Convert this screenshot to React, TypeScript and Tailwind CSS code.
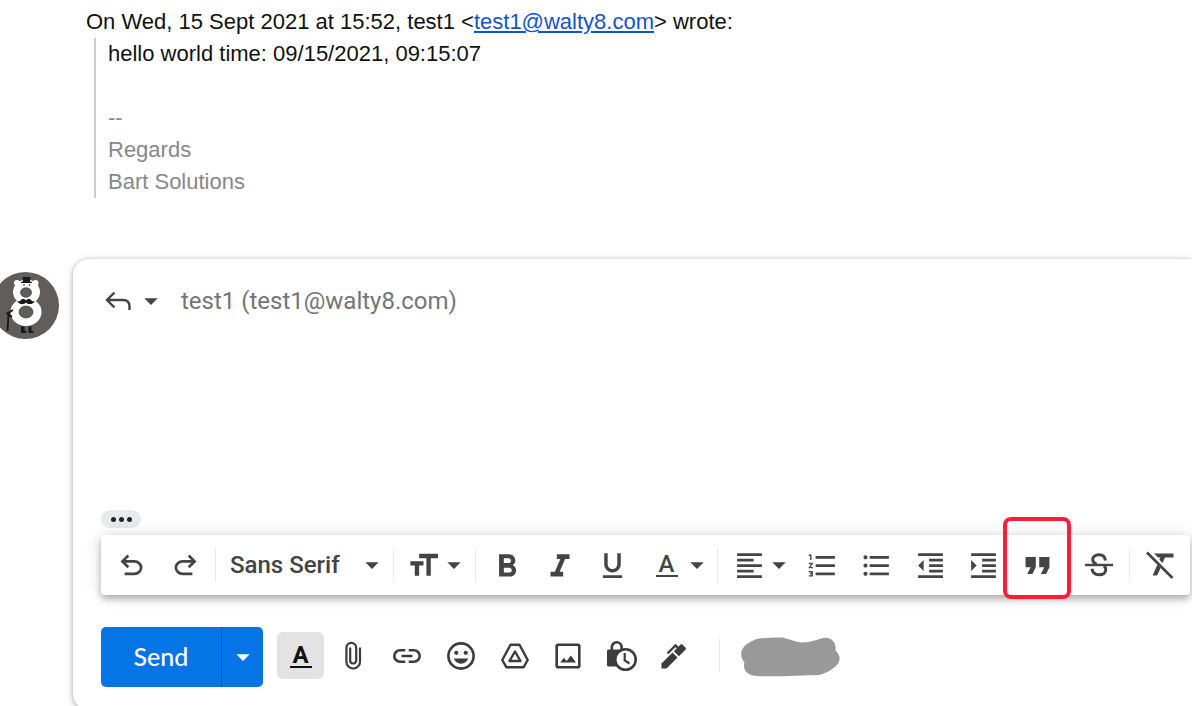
import type { ReactNode } from 'react';
import {
  MdArrowDropDown,
  MdFormatAlignLeft,
  MdFormatBold,
  MdFormatIndentDecrease,
  MdFormatIndentIncrease,
  MdFormatItalic,
  MdFormatListBulleted,
  MdFormatListNumbered,
  MdFormatQuote,
  MdFormatSize,
  MdFormatUnderlined,
} from 'react-icons/md';

interface ToolButtonProps {
  label: string;
  className?: string;
  children: ReactNode;
}

function ToolButton({ label, className = 'w-[54px]', children }: ToolButtonProps) {
  return (
    <button
      type="button"
      aria-label={label}
      title={label}
      className={`flex h-full shrink-0 items-center justify-center ${className}`}
    >
      {children}
    </button>
  );
}

function Divider() {
  return <span className="h-[33px] w-px shrink-0 bg-[#e4e7eb]" />;
}

function Caret() {
  return <MdArrowDropDown size={32} className="-ml-[3px] -mr-1 shrink-0" />;
}

function LetterA({ className = '' }: { className?: string }) {
  return (
    <span
      className={`flex h-[24px] w-[22px] items-end justify-center border-b-2 border-current text-2xl leading-[22px] ${className}`}
    >
      A
    </span>
  );
}

function Avatar() {
  return (
    <svg width="60" height="68" viewBox="0 0 60 68" className="mt-[13px] shrink-0" aria-label="test1">
      <circle cx="25.5" cy="33.5" r="33.5" fill="#625d5c" />
      <g fill="#fff">
        <circle cx="17" cy="11" r="3" />
        <circle cx="35.500" cy="11" r="3" />
        <ellipse cx="26.500" cy="20" rx="13.500" ry="12.500" />
        <ellipse cx="26" cy="40" rx="15.500" ry="14" />
      </g>
      <ellipse cx="26" cy="20.500" rx="5.500" ry="4.800" fill="#625d5c" stroke="#22262a" strokeWidth="0.600" />
      <ellipse cx="26" cy="40" rx="7" ry="6" fill="#625d5c" stroke="#22262a" strokeWidth="0.600" />
      <g fill="#15191d">
        <path d="M22.500 5h8l-.6 4.500 2 .5v1H21v-1l2-.5z" />
        <circle cx="24" cy="13" r=".8" />
        <circle cx="29.500" cy="13" r=".8" />
        <path d="M26 28.500c-2-2.500-5-1.500-5.500 0-.7 1.200-2.300 1-3.200.2.700 3.800 6.700 4.300 8.700 1.800 2 2.500 8 2 8.700-1.800-.9.800-2.500 1-3.200-.2-.5-1.500-3.500-2.500-5.500 0z" />
        <path d="M21 54.500h3.500v4l2 1v1.500H21zM28.500 54.500h3v4l2 1v1.500h-5z" />
      </g>
      <path d="M6.500 42l6.500-4M7 41l5 4M8.500 42.500L7.500 59" fill="none" stroke="#15191d" strokeWidth="1.800" />
    </svg>
  );
}

function ReplyIcon() {
  return (
    <svg width="28" height="22" viewBox="0 0 28 22" fill="none" stroke="currentColor" strokeWidth="2.400">
      <path d="M10.500 2.500L3 10l7.500 7.500M3.500 10H19q6.500 0 6.500 6.500V20" />
    </svg>
  );
}

function UndoIcon({ className = '' }: { className?: string }) {
  return (
    <svg width="33" height="33" viewBox="0 0 24 24" fill="currentColor" className={className}>
      <path d="M7 19v-2h7.100q1.575 0 2.738-1T18 13.500 16.838 11 14.100 10H7.800l2.600 2.600L9 14 4 9l5-5 1.400 1.400L7.800 8h6.300q2.425 0 4.163 1.575T20 13.500t-1.737 3.925T14.100 19z" />
    </svg>
  );
}

function StrikeIcon() {
  return (
    <svg width="30" height="26" viewBox="0 0 30 26" fill="none" stroke="currentColor" strokeWidth="3">
      <path d="M21.500 8.500C21 4.800 18.500 2.800 15 2.800c-3.800 0-6.300 2-6.300 4.700 0 2.200 1.300 3.700 4 4.700M8 16.800c.5 4 3.300 6 7 6 4.200 0 6.800-2 6.800-5 0-1.500-.6-2.800-1.800-3.800" />
      <path d="M1 13h28" strokeWidth="2.400" />
    </svg>
  );
}

function ClearIcon() {
  return (
    <svg width="30" height="28" viewBox="0 0 30 28" fill="none">
      <path d="M9 2.500h19.500v4H20l-2.500 5.500-3.200-3.200 1-2.300H13zM12.500 13.500l3.200 3.200-3.600 7.800H7.600z" fill="currentColor" />
      <path d="M2 1.500l25.500 25.500" stroke="currentColor" strokeWidth="2.600" />
    </svg>
  );
}

function AttachIcon() {
  return (
    <svg width="20" height="30" viewBox="0 0 20 30" fill="none" stroke="currentColor" strokeWidth="2.200">
      <path d="M17 6.500v14.200a6.800 6.800 0 0 1-13.600 0V6.800a4.900 4.900 0 0 1 9.800 0v12.700a3 3 0 0 1-6 0V6.500" />
    </svg>
  );
}

function LinkIcon() {
  return (
    <svg width="30" height="16" viewBox="0 0 30 16" fill="none" stroke="currentColor" strokeWidth="2.600">
      <path d="M13.300 2.300H8a5.700 5.700 0 0 0 0 11.400h5.300M16.700 2.300H22a5.700 5.700 0 0 1 0 11.400h-5.300M9.500 8h11" />
    </svg>
  );
}

function EmojiIcon() {
  return (
    <svg width="30" height="30" viewBox="0 0 30 30" fill="currentColor">
      <circle cx="15" cy="15" r="12.600" fill="none" stroke="currentColor" strokeWidth="2.600" />
      <circle cx="10.300" cy="11.800" r="2.100" />
      <circle cx="19.700" cy="11.800" r="2.100" />
      <path d="M7.800 17.500h14.400c-1.200 3.300-3.900 5.200-7.200 5.200s-6-1.900-7.200-5.200z" />
    </svg>
  );
}

function DriveIcon() {
  return (
    <svg width="30" height="28" viewBox="0 0 30 28" fill="none" stroke="currentColor" strokeWidth="2.400" strokeLinejoin="round">
      <path d="M10.500 2.700h9L27.700 18l-4 7.200H6.300l-4-7.200z" />
      <path d="M15 9.500l5.500 9.500h-11z" />
    </svg>
  );
}

function PhotoIcon() {
  return (
    <svg width="28" height="28" viewBox="0 0 28 28" fill="currentColor">
      <rect x="2.700" y="2.700" width="22.600" height="22.600" rx="1.500" fill="none" stroke="currentColor" strokeWidth="2.600" />
      <path d="M6.300 20.500l3.600-4.700 2.700 3.200 4.300-5.600 5.100 7.100z" />
    </svg>
  );
}

function ConfidentialIcon() {
  return (
    <svg width="32" height="32" viewBox="0 0 32 32" fill="none" stroke="currentColor">
      <path d="M6.800 10.500V7.200a4.900 4.900 0 0 1 9.800 0v3.300" strokeWidth="2.600" />
      <path d="M3.500 9.500h16v17h-16a1.500 1.500 0 0 1-1.500-1.500V11a1.500 1.500 0 0 1 1.500-1.500z" fill="currentColor" stroke="none" />
      <circle cx="20.500" cy="19.500" r="10.300" fill="#fff" strokeWidth="2.600" />
      <path d="M19.700 13v7.300l4.800 3.200" strokeWidth="2.200" />
    </svg>
  );
}

function PenIcon() {
  return (
    <svg width="28" height="28" viewBox="0 0 28 28" fill="currentColor">
      <path d="M1.500 26.500v-5L12.500 10.500l5 5L6.500 26.500z" />
      <path d="M13.800 9.200l6.500-6.500a1.600 1.600 0 0 1 2.300 0l2.800 2.800a1.600 1.600 0 0 1 0 2.300l-6.500 6.500z" />
      <path d="M7.500 11.500l8-8 2.500 2.500" fill="none" stroke="currentColor" strokeWidth="2.300" />
    </svg>
  );
}

function QuotedMessage() {
  return (
    <section className="pl-[86px] pt-[6px] font-['Liberation_Sans',Arial,sans-serif] text-[22px] leading-[32px] text-[#111]">
      <p>
        On Wed, 15 Sept 2021 at 15:52, test1 &lt;
        <a href="mailto:test1@walty8.com" className="text-[#1155cc] underline">
          test1@walty8.com
        </a>
        &gt; wrote:
      </p>
      <blockquote className="ml-[8px] border-l-2 border-[#ccc] pl-3">
        <p>hello world time: 09/15/2021, 09:15:07</p>
        <br />
        <div className="text-[#888]">
          <p>--</p>
          <p>Regards</p>
          <p>Bart Solutions</p>
        </div>
      </blockquote>
    </section>
  );
}

function FormatBar() {
  return (
    <div
      role="toolbar"
      aria-label="Formatting options"
      className="mr-[2px] mt-[7px] flex h-[60px] items-center rounded bg-white pl-[3px] text-[#444] shadow-[0_4px_7px_rgba(0,0,0,0.28),0_0_18px_rgba(0,0,0,0.12)]"
    >
      <ToolButton label="Undo">
        <UndoIcon />
      </ToolButton>
      <ToolButton label="Redo" className="mr-[3px] w-[54px]">
        <UndoIcon className="-scale-x-100" />
      </ToolButton>
      <Divider />
      <div className="relative flex h-full w-[177px] shrink-0 items-center">
        <select
          aria-label="Font"
          className="h-full w-full appearance-none bg-transparent pl-[14px] text-2xl font-medium outline-none"
        >
          <option>Sans Serif</option>
          <option>Serif</option>
          <option>Fixed Width</option>
        </select>
        <MdArrowDropDown size={32} className="pointer-events-none absolute right-[5px]" />
      </div>
      <Divider />
      <ToolButton label="Size" className="w-[81px] pl-[3px]">
        <MdFormatSize size={35} />
        <Caret />
      </ToolButton>
      <Divider />
      <ToolButton label="Bold" className="ml-1 w-[53px] pt-[3px]">
        <MdFormatBold size={38} />
      </ToolButton>
      <ToolButton label="Italic" className="w-[53px] pt-[3px]">
        <MdFormatItalic size={38} />
      </ToolButton>
      <ToolButton label="Underline" className="w-[53px]">
        <MdFormatUnderlined size={33} />
      </ToolButton>
      <ToolButton label="Text colour" className="w-[78px] gap-[6px] pl-2">
        <LetterA className="font-medium" />
        <Caret />
      </ToolButton>
      <Divider />
      <ToolButton label="Align" className="w-[77px] pl-[10px]">
        <MdFormatAlignLeft size={33} />
        <Caret />
      </ToolButton>
      <ToolButton label="Numbered list">
        <MdFormatListNumbered size={33} />
      </ToolButton>
      <ToolButton label="Bulleted list">
        <MdFormatListBulleted size={33} />
      </ToolButton>
      <ToolButton label="Indent less">
        <MdFormatIndentDecrease size={33} />
      </ToolButton>
      <ToolButton label="Indent more" className="w-[53px]">
        <MdFormatIndentIncrease size={33} />
      </ToolButton>
      <div className="relative h-full shrink-0">
        <ToolButton label="Quote">
          <MdFormatQuote size={41} />
        </ToolButton>
        <span className="pointer-events-none absolute -inset-x-[7px] -bottom-1 -top-[18px] rounded-lg border-4 border-[#fb1e3c]" />
      </div>
      <ToolButton label="Strikethrough" className="ml-2 mr-[3px] w-[54px]">
        <StrikeIcon />
      </ToolButton>
      <Divider />
      <ToolButton label="Remove formatting" className="ml-[3px] w-[54px]">
        <ClearIcon />
      </ToolButton>
    </div>
  );
}

function SendBar() {
  return (
    <div className="mt-8 flex h-[60px] items-center text-[#3c3c3c]">
      <div className="flex h-full overflow-hidden rounded-[5px] bg-[#0575e6] text-white">
        <button type="button" className="w-[121px] border-r border-[#0a4fa8] font-['Lato',sans-serif] text-[25px] font-medium">
          Send
        </button>
        <button type="button" aria-label="More send options" className="flex w-[41px] items-center justify-center">
          <MdArrowDropDown size={32} className="shrink-0" />
        </button>
      </div>
      <div className="flex h-full items-center pb-[3px]">
        <button
          type="button"
          aria-label="Formatting options"
          className="ml-[14px] mr-[2px] flex h-[47px] w-[47px] items-center justify-center rounded-md bg-[#e3e3e3] text-[#111]"
        >
          <LetterA className="font-bold" />
        </button>
        <ToolButton label="Attach files">
          <AttachIcon />
        </ToolButton>
        <ToolButton label="Insert link">
          <LinkIcon />
        </ToolButton>
        <ToolButton label="Insert emoji">
          <EmojiIcon />
        </ToolButton>
        <ToolButton label="Insert files using Drive" className="w-[53px]">
          <DriveIcon />
        </ToolButton>
        <ToolButton label="Insert photo" className="w-[53px]">
          <PhotoIcon />
        </ToolButton>
        <ToolButton label="Toggle confidential mode" className="w-[53px]">
          <ConfidentialIcon />
        </ToolButton>
        <ToolButton label="Insert signature" className="mr-[18px] w-[54px]">
          <PenIcon />
        </ToolButton>
        <Divider />
      </div>
      <svg width="100" height="40" viewBox="0 0 100 40" className="ml-[21px] shrink-0" fill="#999">
        <path d="M18 1.500Q30 0 41 .5C50 2 54 5.500 62 5.500 70 5 74 3.500 80 1.500c9-3 16 3 14.500 12 6 6 5 11 0 16-5 4-10 7-16 8.500-20 .5-42 2-62 1C7 39 1 34 3.500 25-1 21-1 13 4 8.500 8 5.500 13 2.500 18 1.500z" />
      </svg>
    </div>
  );
}

export default function App() {
  return (
    <main className="h-screen overflow-hidden bg-white font-['Roboto',sans-serif]">
      <QuotedMessage />
      <div className="mt-[61px] flex items-start">
        <Avatar />
        <section className="ml-[13px] min-w-0 flex-1 rounded-l-2xl bg-white pb-[23px] pl-7 pt-[22px] shadow-[0_1px_5px_rgba(0,0,0,0.3),0_2px_12px_rgba(0,0,0,0.1)]">
          <header className="flex h-10 items-center pl-[3px] text-[#444]">
            <button type="button" aria-label="Type of response" className="flex items-center gap-[3px]">
              <ReplyIcon />
              <MdArrowDropDown size={32} />
            </button>
            <span className="ml-[14px] text-2xl text-[#757575]">test1 (test1@walty8.com)</span>
          </header>
          <textarea aria-label="Message body" className="block h-[189px] w-full resize-none bg-transparent text-[22px] outline-none" />
          <button
            type="button"
            aria-label="Show trimmed content"
            className="flex h-[18px] w-10 items-center justify-center gap-[3px] rounded-full bg-[#e8eaed]"
          >
            <span className="size-[5px] rounded-full bg-[#222]" />
            <span className="size-[5px] rounded-full bg-[#222]" />
            <span className="size-[5px] rounded-full bg-[#222]" />
          </button>
          <FormatBar />
          <SendBar />
        </section>
      </div>
    </main>
  );
}
